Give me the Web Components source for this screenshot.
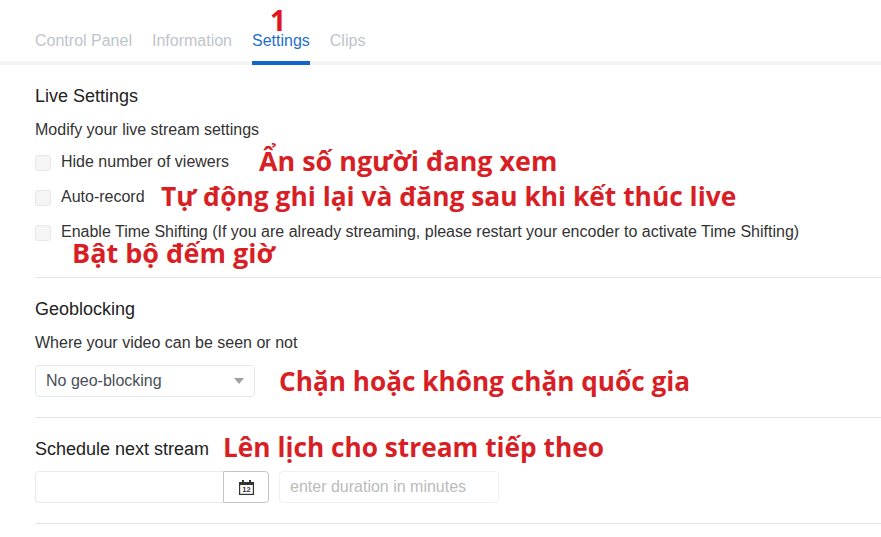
<!DOCTYPE html>
<html lang="en">
<head>
<meta charset="utf-8">
<title>Settings</title>
<style>
  html, body { margin: 0; background: #fff; }
  body { width: 881px; height: 537px; overflow: hidden; position: relative; font-family: "Liberation Sans", Arial, sans-serif; font-size: 16px; color: #333; }
</style>
</head>
<body>
<settings-page>
  <tab-bar slot="tabs">
    <tab-item>Control Panel</tab-item>
    <tab-item>Information</tab-item>
    <tab-item active>Settings</tab-item>
    <tab-item>Clips</tab-item>
  </tab-bar>

  <settings-section heading="Live Settings" sub="Modify your live stream settings" style="--sub-gap:4px;--pad-bottom:27px">
    <check-row>Hide number of viewers</check-row>
    <check-row>Auto-record</check-row>
    <check-row>Enable Time Shifting (If you are already streaming, please restart your encoder to activate Time Shifting)</check-row>
  </settings-section>

  <settings-section heading="Geoblocking" sub="Where your video can be seen or not">
    <geo-select>No geo-blocking</geo-select>
  </settings-section>

  <settings-section heading="Schedule next stream" style="--head-gap:11px">
    <schedule-row></schedule-row>
  </settings-section>
</settings-page>

<note-text style="left:270px;top:9px;font-size:28px;line-height:22px;color:#e3141c">1</note-text>
<note-text style="left:259px;top:143px;font-size:26.9px">Ẩn số người đang xem</note-text>
<note-text style="left:161px;top:178px;font-size:26.35px">Tự động ghi lại và đăng sau khi kết thúc live</note-text>
<note-text style="left:72px;top:235px;font-size:27px">Bật bộ đếm giờ</note-text>
<note-text style="left:279px;top:363px;font-size:26.2px">Chặn hoặc không chặn quốc gia</note-text>
<note-text style="left:223px;top:429px;font-size:26.25px">Lên lịch cho stream tiếp theo</note-text>

<script>
function define(name, css, html, setup) {
  customElements.define(name, class extends HTMLElement {
    constructor() {
      super();
      this.attachShadow({ mode: "open" }).innerHTML = `<style>${css}</style>${html}`;
      if (setup) setup(this);
    }
  });
}

define("settings-page", `
  :host { display: block; }
  .body { padding: 0 0 0 35px; }
`, `<slot name="tabs"></slot><div class="body"><slot></slot></div>`);

define("tab-bar", `
  :host { display: flex; gap: 20px; height: 65px; padding-left: 35px; box-sizing: border-box; border-bottom: 4px solid #f4f4f4; }
`, `<slot></slot>`);

define("tab-item", `
  :host { display: block; height: 65px; box-sizing: border-box; padding-top: 32px; line-height: 18px; color: #c0c4cc; }
  :host([active]) { color: #1f6fc9; border-bottom: 4px solid #1166cc; }
`, `<slot></slot>`);

define("settings-section", `
  :host { display: block; padding: 20px 0 var(--pad-bottom, 20px); border-bottom: 1px solid #e4e4e4; }
  h2 { margin: 0 0 var(--head-gap, 12px); font-size: 18px; line-height: 22px; font-weight: 400; color: #222; }
  p { margin: 0 0 var(--sub-gap, 11px); font-size: 16px; line-height: 22px; color: #333; }
  p:empty { display: none; }
`, `<h2></h2><p></p><slot></slot>`, el => {
  el.shadowRoot.querySelector("h2").textContent = el.getAttribute("heading") || "";
  el.shadowRoot.querySelector("p").textContent = el.getAttribute("sub") || "";
});

define("check-row", `
  :host { display: flex; align-items: center; gap: 10px; height: 35px; font-size: 16px; color: #333; white-space: nowrap; }
  i { display: block; width: 16px; height: 16px; box-sizing: border-box; background: #f5f5f5; border: 1px solid #e8e8e8; border-radius: 3px; flex: none; }
  span { position: relative; top: -1px; }
`, `<i></i><span><slot></slot></span>`);

define("geo-select", `
  :host { display: flex; align-items: center; justify-content: space-between; width: 220px; height: 32px; box-sizing: border-box; padding: 0 10px; border: 1px solid #e4e7ed; border-radius: 4px; color: #4a4f57; font-size: 16px; }
  i { width: 0; height: 0; border: 5px solid transparent; border-top: 6px solid #a0a0a0; border-bottom: 0; }
`, `<span><slot></slot></span><i></i>`);

define("schedule-row", `
  :host { display: flex; gap: 10px; }
  .date { display: flex; width: 234px; height: 32px; box-sizing: border-box; }
  .field { flex: 1; border: 1px solid #eaeaea; border-right: 0; border-radius: 4px 0 0 4px; }
  .btn { width: 46px; display: flex; align-items: center; justify-content: center; box-sizing: border-box; border: 1px solid #c4c4c4; border-radius: 0 4px 4px 0; }
  .dur { width: 220px; height: 32px; box-sizing: border-box; border: 1px solid #f0f0f0; border-radius: 4px; padding: 0 10px; line-height: 29px; color: #bbb; font-size: 16px; }
  svg text { font: 700 7.5px "Liberation Sans", sans-serif; fill: #333; }
`, `<div class="date"><div class="field"></div><div class="btn">
  <svg width="15" height="15" viewBox="0 0 15 15"><path fill="#333" d="M0 2h3V0h2v2h5V0h2v2h3v13H0z"/><rect x="1.2" y="5" width="12.6" height="8.8" fill="#fff"/><text x="7.5" y="12.4" text-anchor="middle">12</text></svg>
</div></div><div class="dur">enter duration in minutes</div>`);

define("note-text", `
  :host { position: absolute; font-family: "Open Sans", "Noto Sans", sans-serif; font-weight: 700; font-size: 27px; line-height: 36px; color: #d81f26; white-space: nowrap; }
`, `<slot></slot>`);
</script>
</body>
</html>
